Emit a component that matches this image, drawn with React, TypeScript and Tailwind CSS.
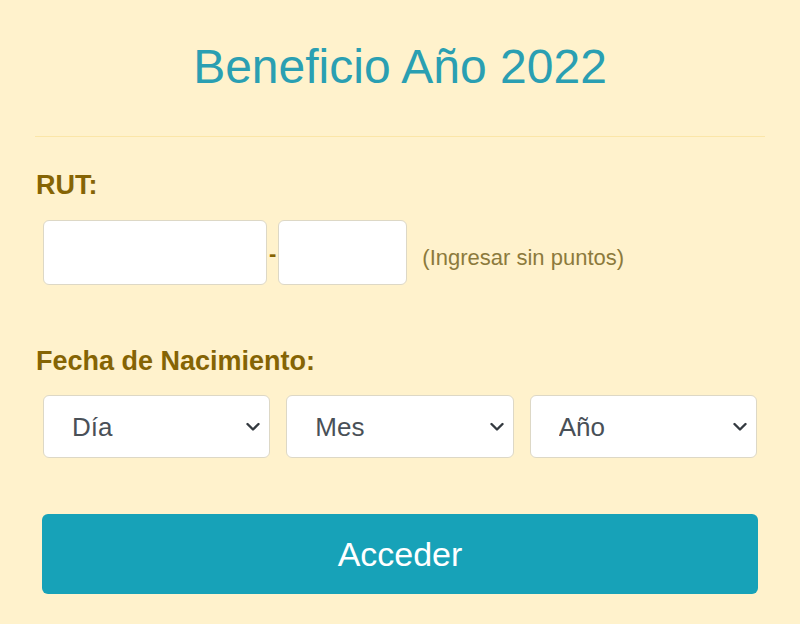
import React from "react";

function Chevron() {
  return (
    <svg
      className="pointer-events-none absolute right-[10px] top-1/2 -translate-y-1/2"
      width="14"
      height="9"
      viewBox="0 0 14 9"
      fill="none"
    >
      <path d="M1.5 1.5 L7 7 L12.5 1.5" stroke="#343a40" strokeWidth="2.4" strokeLinecap="round" strokeLinejoin="round" />
    </svg>
  );
}

function Select({ label }: { label: string }) {
  return (
    <div className="relative h-[63px] flex-1">
      <select className="h-full w-full appearance-none rounded-[6px] border border-[#ddd8c6] bg-white pl-[28px] text-[26px] leading-none text-[#495057] outline-none">
        <option>{label}</option>
      </select>
      <Chevron />
    </div>
  );
}

export default function App() {
  return (
    <div
      className="min-h-[624px] w-full bg-[#fff2cc] px-[35px]"
      style={{ fontFamily: '"Liberation Sans", Arial, sans-serif' }}
    >
      <h1 className="pt-[43px] text-center text-[48px] leading-none font-normal text-[#2a9fb2]">
        Beneficio Año 2022
      </h1>
      <div className="mt-[45px] border-t border-[#fbe6a8]" />
      <div className="mt-[35px] pl-[1px] text-[27px] font-bold leading-none text-[#856404]">RUT:</div>
      <div className="mt-[21px] flex items-center pl-[8px]">
        <input className="h-[65px] w-[224px] rounded-[6px] border border-[#ddd8c6] bg-white outline-none" />
        <span className="mx-[2px] mt-[2px] text-[22px] font-bold leading-none text-[#856404]">-</span>
        <input className="h-[65px] w-[129px] rounded-[6px] border border-[#ddd8c6] bg-white outline-none" />
        <span className="ml-[15px] mt-[10px] text-[22px] leading-none text-[#8c7a3c]">(Ingresar sin puntos)</span>
      </div>
      <div className="mt-[63px] pl-[1px] text-[27px] font-bold leading-none text-[#856404]">Fecha de Nacimiento:</div>
      <div className="mt-[20px] flex gap-[16px] pl-[8px] pr-[8px]">
        <Select label="Día" />
        <Select label="Mes" />
        <Select label="Año" />
      </div>
      <div className="mt-[56px] px-[7px]">
        <button className="h-[80px] w-full rounded-[6px] bg-[#17a2b8] text-[34px] leading-none text-white">
          Acceder
        </button>
      </div>
    </div>
  );
}
